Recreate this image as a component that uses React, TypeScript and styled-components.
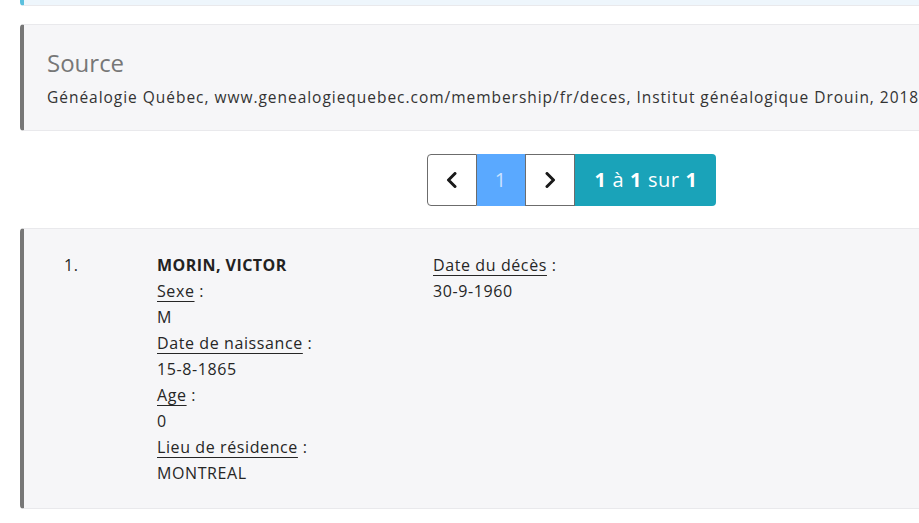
import React from 'react';
import styled, { createGlobalStyle } from 'styled-components';

const GlobalStyle = createGlobalStyle`
    html, body {
        margin: 0;
        padding: 0;
        background: #fff;
        overflow: hidden;
    }
    body {
        font-family: "Open Sans", "Noto Sans", sans-serif;
        color: #333;
    }
`;

const Page = styled.div`
    width: 1103px;
    padding-left: 20px;
`;

const Panel = styled.div<{ $accent: string; $bg: string }>`
    background: ${(p) => p.$bg};
    border: 1px solid #e9e9ec;
    border-left: 4px solid ${(p) => p.$accent};
    border-radius: 4px;
`;

const TopStrip = styled(Panel)`
    height: 5px;
    border-top: none;
    border-top-left-radius: 0;
    border-top-right-radius: 0;
    margin-bottom: 18px;
`;

const SourcePanel = styled(Panel)`
    padding: 23px 24px 21px 23px;
`;

const SourceTitle = styled.h4`
    margin: 0 0 9px;
    font-size: 24px;
    font-weight: 400;
    line-height: 29px;
    color: #777;
`;

const SourceText = styled.p`
    margin: 0;
    font-size: 15.5px;
    line-height: 22.5px;
    letter-spacing: 0.97px;
    color: #333;
    white-space: nowrap;
`;

const PagerRow = styled.div`
    display: flex;
    justify-content: center;
    margin: 23px 0 22px;
`;

const Pager = styled.div`
    display: flex;
    height: 52px;
`;

const ArrowBtn = styled.button<{ $side: 'left' | 'right' }>`
    width: 50px;
    height: 52px;
    display: flex;
    align-items: center;
    justify-content: center;
    background: #fff;
    border: 1px solid #6c6c6c;
    border-radius: ${(p) => (p.$side === 'left' ? '4px 0 0 4px' : '0')};
    padding: 0;
    cursor: pointer;
`;

const PageNum = styled.div`
    width: 48px;
    height: 52px;
    display: flex;
    align-items: center;
    justify-content: center;
    background: #5aa9ff;
    color: #c9e2ff;
    font-size: 20px;
`;

const Info = styled.div`
    display: flex;
    align-items: center;
    padding: 0 19px 0 20px;
    height: 52px;
    background: #1aa3b9;
    color: #fff;
    font-size: 20px;
    letter-spacing: 0.5px;
    border-radius: 0 4px 4px 0;
    gap: 6px;

    b {
        font-weight: 700;
    }
`;

const RecordPanel = styled(Panel)`
    padding: 23px 0 22px;
`;

const Row = styled.div`
    display: grid;
    grid-template-columns: 40px 93px 276px 1fr;
    font-size: 16px;
    line-height: 26px;
    letter-spacing: 0.6px;
    color: #262626;
`;

const Num = styled.div`
    grid-column: 2;
`;

const Col = styled.div`
    display: flex;
    flex-direction: column;
`;

const Name = styled.div`
    font-weight: 700;
    letter-spacing: 0.45px;
    color: #222;
`;

const Label = styled.div`
    span {
        text-decoration: underline;
        text-decoration-thickness: 1px;
        text-underline-offset: 4px;
    }
`;

const Chevron = ({ dir }: { dir: 'left' | 'right' }) => (
    <svg width="14" height="16" viewBox="0 0 14 16">
        <polyline
            points={dir === 'left' ? '10,1.5 3.5,8 10,14.5' : '4,1.5 10.5,8 4,14.5'}
            fill="none"
            stroke="#1a1a1a"
            strokeWidth="3"
            strokeLinecap="round"
            strokeLinejoin="round"
        />
    </svg>
);

const Field = ({ label, value }: { label: string; value: string }) => (
    <>
        <Label><span>{label}</span> :</Label>
        <div>{value}</div>
    </>
);

const App = () => {
    return (
        <>
            <GlobalStyle />
            <Page>
                <TopStrip $accent="#5bc0de" $bg="#eef6fc" />

                <SourcePanel $accent="#777" $bg="#f6f6f8">
                    <SourceTitle>Source</SourceTitle>
                    <SourceText>
                        Généalogie Québec, www.genealogiequebec.com/membership/fr/deces, Institut généalogique Drouin, 2018
                    </SourceText>
                </SourcePanel>

                <PagerRow>
                    <Pager>
                        <ArrowBtn $side="left"><Chevron dir="left" /></ArrowBtn>
                        <PageNum>1</PageNum>
                        <ArrowBtn $side="right"><Chevron dir="right" /></ArrowBtn>
                        <Info><b>1</b> à <b>1</b> sur <b>1</b></Info>
                    </Pager>
                </PagerRow>

                <RecordPanel $accent="#777" $bg="#f6f6f8">
                    <Row>
                        <Num>1.</Num>
                        <Col>
                            <Name>MORIN, VICTOR</Name>
                            <Field label="Sexe" value="M" />
                            <Field label="Date de naissance" value="15-8-1865" />
                            <Field label="Age" value="0" />
                            <Field label="Lieu de résidence" value="MONTREAL" />
                        </Col>
                        <Col>
                            <Field label="Date du décès" value="30-9-1960" />
                        </Col>
                    </Row>
                </RecordPanel>
            </Page>
        </>
    );
};

export default App;
